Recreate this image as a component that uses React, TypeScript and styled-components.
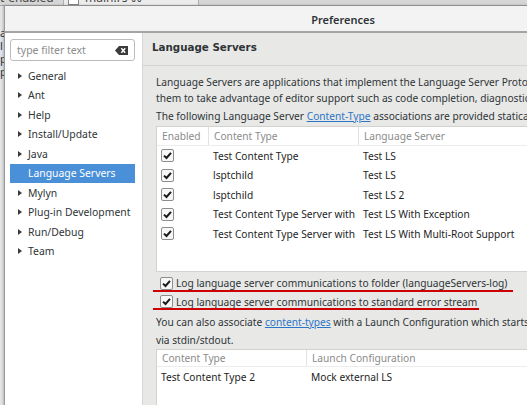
import React from "react"
import styled, { createGlobalStyle } from "styled-components"

const GlobalStyle = createGlobalStyle`
    html, body {
        margin: 0;
        padding: 0;
        width: 527px;
        height: 405px;
        overflow: hidden;
        font-family: "Noto Sans", "DejaVu Sans", sans-serif;
        font-size: 10.2px;
        color: #2e3436;
    }
`

interface TreeItemI {
    label: string
    expandable?: boolean
    selected?: boolean
}

const treeItems: TreeItemI[] = [
    { label: "General", expandable: true },
    { label: "Ant", expandable: true },
    { label: "Help", expandable: true },
    { label: "Install/Update", expandable: true },
    { label: "Java", expandable: true },
    { label: "Language Servers", selected: true },
    { label: "Mylyn", expandable: true },
    { label: "Plug-in Development", expandable: true },
    { label: "Run/Debug", expandable: true },
    { label: "Team", expandable: true },
]

const servers = [
    { type: "Test Content Type", server: "Test LS" },
    { type: "lsptchild", server: "Test LS" },
    { type: "lsptchild", server: "Test LS 2" },
    { type: "Test Content Type Server with", server: "Test LS With Exception" },
    { type: "Test Content Type Server with", server: "Test LS With Multi-Root Support" },
]

const CheckBox: React.FunctionComponent = () => (
    <Box>
        <svg width="9" height="9" viewBox="0 0 9 9">
            <path d="M1 4.6 L3.5 7 L8 1.8" fill="none" stroke="#1a1a1a" strokeWidth="2" />
        </svg>
    </Box>
)

const ClearIcon: React.FunctionComponent = () => (
    <svg width="13" height="9" viewBox="0 0 13 9">
        <path d="M4 0 H13 V9 H4 L0 4.5 Z" fill="#3b3b3b" />
        <path d="M6.3 2.3 L10.2 6.7 M10.2 2.3 L6.3 6.7" stroke="#fff" strokeWidth="1.5" />
    </svg>
)

export default function App() {
    return (
        <Desktop>
            <GlobalStyle />
            <EditorTabs>
                <TabLabel>t-enabled</TabLabel>
                <FileTab>
                    <FileGlyph />
                    main.rs ⌘
                </FileTab>
            </EditorTabs>
            <EditorGutter>a l p p</EditorGutter>

            <Dialog>
                <TitleBar>Preferences</TitleBar>
                <DialogBody>
                    <Sidebar>
                        <FilterBox>
                            <FilterText>type filter text</FilterText>
                            <ClearIcon />
                        </FilterBox>
                        <Tree>
                            {treeItems.map((item) => (
                                <TreeRow key={item.label} selected={item.selected}>
                                    <Arrow visible={item.expandable} />
                                    {item.label}
                                </TreeRow>
                            ))}
                        </Tree>
                    </Sidebar>

                    <Page>
                        <PageTitle>Language Servers</PageTitle>
                        <PageContent>
                            <Para>
                                Language Servers are applications that implement the Language Server Protocol to allow
                                <br />
                                them to take advantage of editor support such as code completion, diagnostics and more.
                            </Para>
                            <Para>
                                The following Language Server <Link>Content-Type</Link> associations are provided statically
                            </Para>

                            <Table height={144}>
                                <HeaderRow>
                                    <HeadCell width={52}>Enabled</HeadCell>
                                    <HeadCell width={150}>Content Type</HeadCell>
                                    <HeadCell width={200} last>Language Server</HeadCell>
                                </HeaderRow>
                                {servers.map((s, i) => (
                                    <Row key={i}>
                                        <Cell width={52}><CheckBox /></Cell>
                                        <Cell width={150}>{s.type}</Cell>
                                        <Cell width={200}>{s.server}</Cell>
                                    </Row>
                                ))}
                            </Table>

                            <Options>
                                <Option underline={360}>
                                    <CheckBox />
                                    Log language server communications to folder (languageServers-log)
                                </Option>
                                <Option underline={326}>
                                    <CheckBox />
                                    Log language server communications to standard error stream
                                </Option>
                            </Options>

                            <LaunchPara>
                                You can also associate <Link>content-types</Link> with a Launch Configuration which starts a Language Server
                                <br />
                                via stdin/stdout.
                            </LaunchPara>

                            <Table height={80}>
                                <HeaderRow short>
                                    <HeadCell width={150}>Content Type</HeadCell>
                                    <HeadCell width={250} last>Launch Configuration</HeadCell>
                                </HeaderRow>
                                <Row>
                                    <Cell width={150} pad={4}>Test Content Type 2</Cell>
                                    <Cell width={250}>Mock external LS</Cell>
                                </Row>
                            </Table>
                        </PageContent>
                    </Page>
                </DialogBody>
            </Dialog>
        </Desktop>
    )
}

const Desktop = styled.div`
    position: relative;
    width: 527px;
    height: 405px;
    background-color: #dcdcdc;
    overflow: hidden;
`

const EditorTabs = styled.div`
    display: flex;
    align-items: flex-end;
    height: 5px;
    overflow: hidden;
    background-color: #d6d6d6;
    border-bottom: 1px solid #a8a8a8;
    font-size: 12px;
    line-height: 14px;
`

const TabLabel = styled.div`
    width: 63px;
    flex: none;
    color: #444;
    border-right: 1px solid #b0b0b0;
    height: 14px;
    margin-top: -11px;
`

const FileTab = styled.div`
    display: flex;
    align-items: flex-end;
    gap: 6px;
    padding-left: 4px;
    width: 130px;
    color: #444;
    height: 14px;
    margin-top: -11px;
    background-color: #ececec;
    border-right: 1px solid #b0b0b0;
`

const FileGlyph = styled.div`
    width: 9px;
    height: 12px;
    border: 1px solid #888;
    background-color: #fff;
`

const EditorGutter = styled.div`
    width: 4px;
    height: 400px;
    overflow: hidden;
    box-sizing: border-box;
    padding-top: 20px;
    font-size: 11px;
    line-height: 13px;
    word-break: break-all;
    color: #333;
    background: linear-gradient(#e4e4e4 0 30px, #dde3ec 30px 70px, #e4e4e4 70px);
`

const Dialog = styled.div`
    position: absolute;
    left: 4px;
    top: 5px;
    width: 676px;
    height: 420px;
    display: flex;
    flex-direction: column;
    border-left: 1px solid #9a9a9a;
    border-top: 1px solid #8f8f8f;
    background-color: #e8e8e7;
    box-shadow: -1px 0 2px rgba(0, 0, 0, 0.2);
`

const TitleBar = styled.div`
    height: 27px;
    flex: none;
    display: flex;
    align-items: center;
    justify-content: center;
    box-sizing: border-box;
    padding-top: 1px;
    background-color: #f3f3f3;
    border-bottom: 2px solid #a4a4a4;
    font-family: "Noto Sans", sans-serif;
    font-size: 11px;
    font-weight: 600;
    color: #2e3436;
`

const DialogBody = styled.div`
    flex: 1;
    display: flex;
    min-height: 0;
`

const Sidebar = styled.div`
    width: 138px;
    flex: none;
    background-color: #ffffff;
    padding: 6px 0 0 5px;
    box-sizing: border-box;
    border-right: 1px solid #d6d6d6;
`

const FilterBox = styled.div`
    width: 125px;
    height: 22px;
    box-sizing: border-box;
    display: flex;
    align-items: center;
    justify-content: space-between;
    padding: 0 6px 0 6px;
    border: 1px solid #bcbcbc;
    border-radius: 3px;
    background-color: #fff;
`

const FilterText = styled.span`
    color: #8c8c8c;
    font-size: 10.5px;
`

const Tree = styled.div`
    display: flex;
    flex-direction: column;
    margin-top: 5px;
`

const TreeRow = styled.div<{ selected?: boolean }>`
    display: flex;
    align-items: center;
    gap: 6px;
    height: 19.5px;
    width: 125px;
    padding-left: 8px;
    box-sizing: border-box;
    white-space: nowrap;
    font-size: 10.4px;
    color: ${(p) => (p.selected ? "#ffffff" : "#2e3436")};
    background-color: ${(p) => (p.selected ? "#4a90d9" : "transparent")};
`

const Arrow = styled.span<{ visible?: boolean }>`
    width: 0;
    height: 0;
    flex: none;
    border-top: 3.5px solid transparent;
    border-bottom: 3.5px solid transparent;
    border-left: 4px solid ${(p) => (p.visible ? "#3a3a3a" : "transparent")};
`

const Page = styled.div`
    flex: 1;
    display: flex;
    flex-direction: column;
    min-width: 0;
`

const PageTitle = styled.div`
    height: 33px;
    flex: none;
    box-sizing: border-box;
    padding: 8px 0 0 9px;
    border-bottom: 1px solid #d4d4d4;
    font-family: "DejaVu Sans", sans-serif;
    font-size: 10.3px;
    font-weight: bold;
    color: #2e3436;
`

const PageContent = styled.div`
    padding: 8px 0 0 13px;
    display: flex;
    flex-direction: column;
`

const Para = styled.p`
    margin: 0 0 2px 0;
    line-height: 16px;
    white-space: nowrap;
`

const LaunchPara = styled(Para)`
    margin: 2px 0 0 0;
    line-height: 18px;
`

const Link = styled.span`
    color: #2a76c6;
    text-decoration: underline;
`

const Table = styled.div<{ height: number }>`
    height: ${(p) => p.height}px;
    flex: none;
    width: 400px;
    background-color: #ffffff;
    border: 1px solid #d2d2d2;
    display: flex;
    flex-direction: column;
`

const HeaderRow = styled.div<{ short?: boolean }>`
    display: flex;
    height: ${(p) => (p.short ? 16 : 18)}px;
    border-bottom: 1px solid #ececec;
`

const HeadCell = styled.div<{ width: number; last?: boolean }>`
    width: ${(p) => p.width}px;
    flex: none;
    box-sizing: border-box;
    padding-left: 5px;
    display: flex;
    align-items: center;
    color: #8b8b8b;
    border-right: ${(p) => (p.last ? "none" : "1px solid #e2e2e2")};
`

const Row = styled.div`
    display: flex;
    height: 19.5px;
    align-items: center;
`

const Cell = styled.div<{ width: number; pad?: number }>`
    width: ${(p) => p.width}px;
    flex: none;
    box-sizing: border-box;
    padding-left: ${(p) => (p.pad ?? 4)}px;
    white-space: nowrap;
    overflow: hidden;
    display: flex;
    align-items: center;
    color: #1e1e1e;
`

const Box = styled.span`
    width: 11px;
    height: 11px;
    flex: none;
    border: 1px solid #8d8d8d;
    border-radius: 2px;
    background-color: #f7f7f7;
    display: inline-flex;
    align-items: center;
    justify-content: center;
`

const Options = styled.div`
    display: flex;
    flex-direction: column;
    margin-top: 2px;
`

const Option = styled.div<{ underline: number }>`
    position: relative;
    display: flex;
    align-items: center;
    gap: 3px;
    height: 18.5px;
    padding-left: 4px;
    white-space: nowrap;

    &::after {
        content: "";
        position: absolute;
        left: -3px;
        bottom: 1px;
        width: ${(p) => p.underline}px;
        height: 2px;
        background-color: #cc0000;
    }
`
